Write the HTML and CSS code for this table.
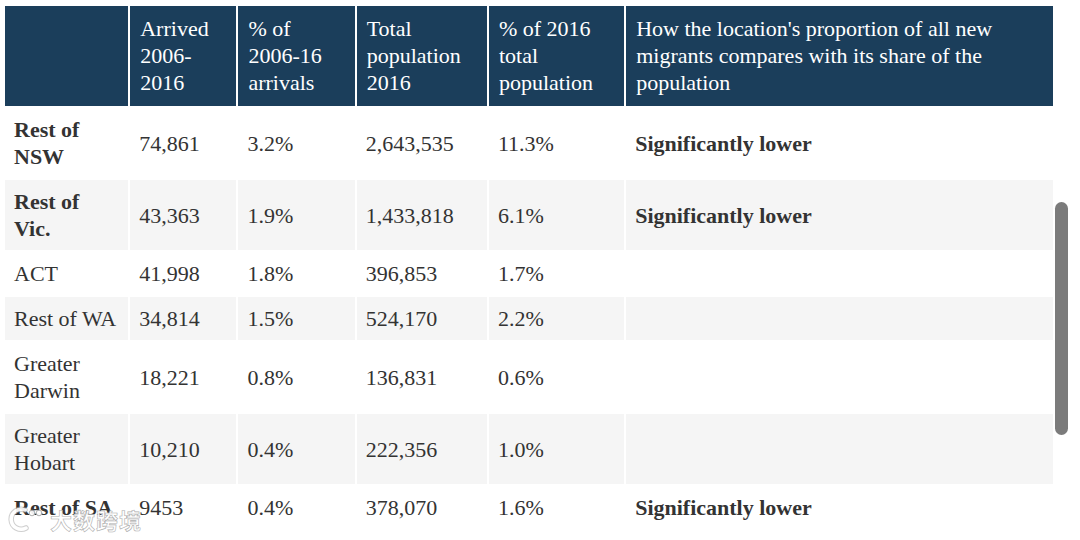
FILE: index.html
```html
<!DOCTYPE html>
<html>
<head>
<meta charset="utf-8">
<link rel="stylesheet" href="styles.css">
</head>
<body>
<div class="frame">
  <table class="data">
    <colgroup>
      <col class="c1"><col class="c2"><col class="c3"><col class="c4"><col class="c5"><col class="c6">
    </colgroup>
    <thead>
      <tr>
        <th></th>
        <th>Arrived 2006-2016</th>
        <th>% of 2006-16 arrivals</th>
        <th>Total population 2016</th>
        <th>% of 2016 total population</th>
        <th>How the location's proportion of all new migrants compares with its share of the population</th>
      </tr>
    </thead>
    <tbody>
      <tr>
        <td class="name strong">Rest of NSW</td><td>74,861</td><td>3.2%</td><td>2,643,535</td><td>11.3%</td><td class="strong">Significantly lower</td>
      </tr>
      <tr class="alt">
        <td class="name strong">Rest of Vic.</td><td>43,363</td><td>1.9%</td><td>1,433,818</td><td>6.1%</td><td class="strong">Significantly lower</td>
      </tr>
      <tr>
        <td class="name">ACT</td><td>41,998</td><td>1.8%</td><td>396,853</td><td>1.7%</td><td></td>
      </tr>
      <tr class="alt">
        <td class="name">Rest of WA</td><td>34,814</td><td>1.5%</td><td>524,170</td><td>2.2%</td><td></td>
      </tr>
      <tr>
        <td class="name">Greater Darwin</td><td>18,221</td><td>0.8%</td><td>136,831</td><td>0.6%</td><td></td>
      </tr>
      <tr class="alt">
        <td class="name">Greater Hobart</td><td>10,210</td><td>0.4%</td><td>222,356</td><td>1.0%</td><td></td>
      </tr>
      <tr>
        <td class="name strong">Rest of SA</td><td>9453</td><td>0.4%</td><td>378,070</td><td>1.6%</td><td class="strong">Significantly lower</td>
      </tr>
    </tbody>
  </table>
  <div class="scrollbar"></div>
  <div class="watermark">
    <svg class="wm-logo" width="38" height="28" viewBox="0 0 38 28">
      <path d="M19 5 A10 10 0 1 0 20 23" fill="none" stroke="#aaa" stroke-width="5.5" stroke-linecap="round" stroke-opacity=".6"/>
      <path d="M19 5 A10 10 0 1 0 20 23" fill="none" stroke="#fff" stroke-width="3.5" stroke-linecap="round"/>
      <circle cx="26" cy="8" r="2.8" fill="#fff" stroke="#aaa" stroke-width="1"/>
      <circle cx="33" cy="8" r="2.8" fill="#fff" stroke="#aaa" stroke-width="1"/>
    </svg>
    <span class="wm-text">大数跨境</span>
  </div>
</div>
</body>
</html>
```

FILE: styles.css
```css
html, body {
  margin: 0;
  padding: 0;
  background: #ffffff;
}

.frame {
  position: relative;
  width: 1080px;
  height: 540px;
  overflow: hidden;
  padding: 4px 0 0 3px;
  box-sizing: border-box;
}

.data {
  border-collapse: separate;
  border-spacing: 2px;
  table-layout: fixed;
  width: 1052px;
  font-family: "Liberation Serif", "Times New Roman", serif;
  font-size: 22px;
  line-height: 27px;
  color: #333333;
}

.c1 { width: 123px; }
.c2 { width: 106px; }
.c3 { width: 116px; }
.c4 { width: 130px; }
.c5 { width: 135px; }
.c6 { width: 426px; }

.data th {
  background: #1b3e5b;
  color: #ffffff;
  font-weight: normal;
  text-align: left;
  vertical-align: top;
  padding: 9px 10px 10px 10px;
}

.data td {
  padding: 8px 9px 8px 9px;
  vertical-align: middle;
  text-align: left;
}

.data tr.alt td {
  background: #f5f5f5;
}

.data td.strong {
  font-weight: bold;
}

.scrollbar {
  position: absolute;
  left: 1055px;
  top: 202px;
  width: 13px;
  height: 233px;
  border-radius: 7px;
  background: #7b7b7b;
}

.watermark {
  position: absolute;
  left: 6px;
  top: 505px;
  display: flex;
  align-items: center;
  gap: 6px;
  opacity: 0.92;
}

.wm-text {
  font-family: "Noto Sans CJK SC", sans-serif;
  font-size: 22px;
  line-height: 28px;
  font-weight: bold;
  color: #ffffff;
  letter-spacing: 1px;
  -webkit-text-stroke: 0.6px #a8a8a8;
}
```
